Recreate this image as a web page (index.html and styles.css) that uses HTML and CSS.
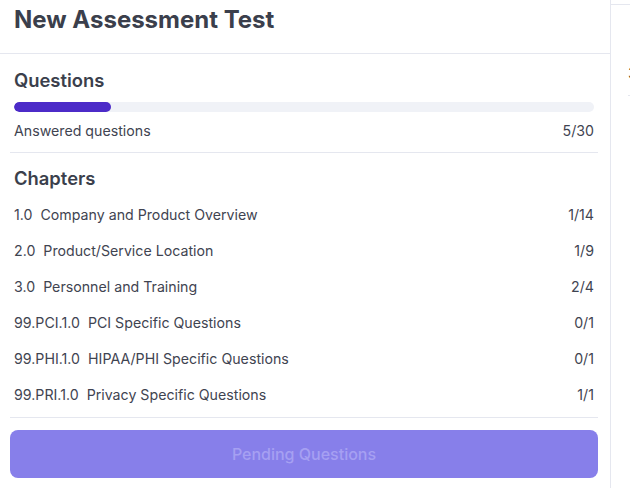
FILE: index.html
```html
<!DOCTYPE html>
<html lang="en">
<head>
    <meta charset="UTF-8">
    <meta name="viewport" content="width=device-width, initial-scale=1.0">
    <title>New Assessment Test</title>
    <link rel="stylesheet" href="styles.css">
</head>
<body>

    <div class="layout">
        <!-- Assessment summary panel -->
        <aside class="summary">
            <header class="summary-header">
                <h1>New Assessment Test</h1>
            </header>

            <div class="summary-body">
                <section class="block">
                    <h2>Questions</h2>
                    <div class="progress">
                        <div class="progress-fill" style="width: 16.67%"></div>
                    </div>
                    <div class="row">
                        <span>Answered questions</span>
                        <span>5/30</span>
                    </div>
                </section>

                <section class="block chapters">
                    <h2>Chapters</h2>
                    <ul class="chapter-list">
                        <li class="row"><span><b>1.0</b>Company and Product Overview</span><span>1/14</span></li>
                        <li class="row"><span><b>2.0</b>Product/Service Location</span><span>1/9</span></li>
                        <li class="row"><span><b>3.0</b>Personnel and Training</span><span>2/4</span></li>
                        <li class="row"><span><b>99.PCI.1.0</b>PCI Specific Questions</span><span>0/1</span></li>
                        <li class="row"><span><b>99.PHI.1.0</b>HIPAA/PHI Specific Questions</span><span>0/1</span></li>
                        <li class="row"><span><b>99.PRI.1.0</b>Privacy Specific Questions</span><span>1/1</span></li>
                    </ul>
                </section>

                <button class="pending" disabled>Pending Questions</button>
            </div>
        </aside>

        <!-- Question panel (cut off on the right) -->
        <main class="content">
            <div class="content-inner">
                <span class="content-num">3</span>
            </div>
        </main>
    </div>

</body>
</html>
```

FILE: styles.css
```css
html, body {
    margin: 0;
    padding: 0;
    background-color: #fff;
    overflow: hidden;
}
body {
    font-family: Inter, "Noto Sans", sans-serif;
    color: #3f4451;
}
.layout {
    display: flex;
    width: 630px;
    height: 488px;
}
.summary {
    width: 610px;
    flex-shrink: 0;
    border-right: 1px solid #e5e7ef;
}
.summary-header {
    height: 54px;
    box-sizing: border-box;
    padding: 5px 14px;
    border-bottom: 1px solid #e5e7ef;
}
h1 {
    margin: 0;
    font-size: 24px;
    line-height: 30px;
    font-weight: 700;
    color: #3b3f4c;
}
.summary-body {
    padding: 0 12px 0 10px;
}
.block {
    padding: 14px 4px 11px;
    border-bottom: 1px solid #e5e7ef;
}
h2 {
    margin: 0;
    font-size: 18.4px;
    line-height: 24px;
    font-weight: 600;
    color: #3b3f4c;
}
.progress {
    margin-top: 10px;
    height: 10px;
    border-radius: 5px;
    background-color: #f0f2f7;
    overflow: hidden;
}
.progress-fill {
    height: 100%;
    border-radius: 5px;
    background-color: #4c2bc8;
}
.row {
    display: flex;
    justify-content: space-between;
    align-items: center;
    font-size: 14.2px;
    line-height: 20px;
}
.block > .row {
    margin-top: 9px;
}
.chapters {
    padding-top: 13px;
    padding-bottom: 4px;
}
.chapter-list {
    list-style: none;
    margin: 7px 0 0;
    padding: 0;
}
.chapter-list .row {
    height: 36px;
}
.chapter-list b {
    font-weight: 400;
    margin-right: 8px;
}
.pending {
    display: block;
    width: 100%;
    height: 48px;
    margin-top: 12px;
    border: none;
    border-radius: 8px;
    background-color: #877fea;
    color: #a6a0f2;
    font-family: Inter, "Noto Sans", sans-serif;
    font-size: 16px;
    font-weight: 500;
}
.content {
    flex: 1;
    padding-top: 4px;
}
.content-inner {
    border-top: 1px solid #e5e7ef;
    height: 100%;
    padding: 58px 0 0 17px;
    box-sizing: border-box;
}
.content-num {
    display: block;
    font-size: 16px;
    line-height: 20px;
    color: #6b4a2f;
    padding-bottom: 12px;
    border-bottom: 1px solid #e5e7ef;
}
```
